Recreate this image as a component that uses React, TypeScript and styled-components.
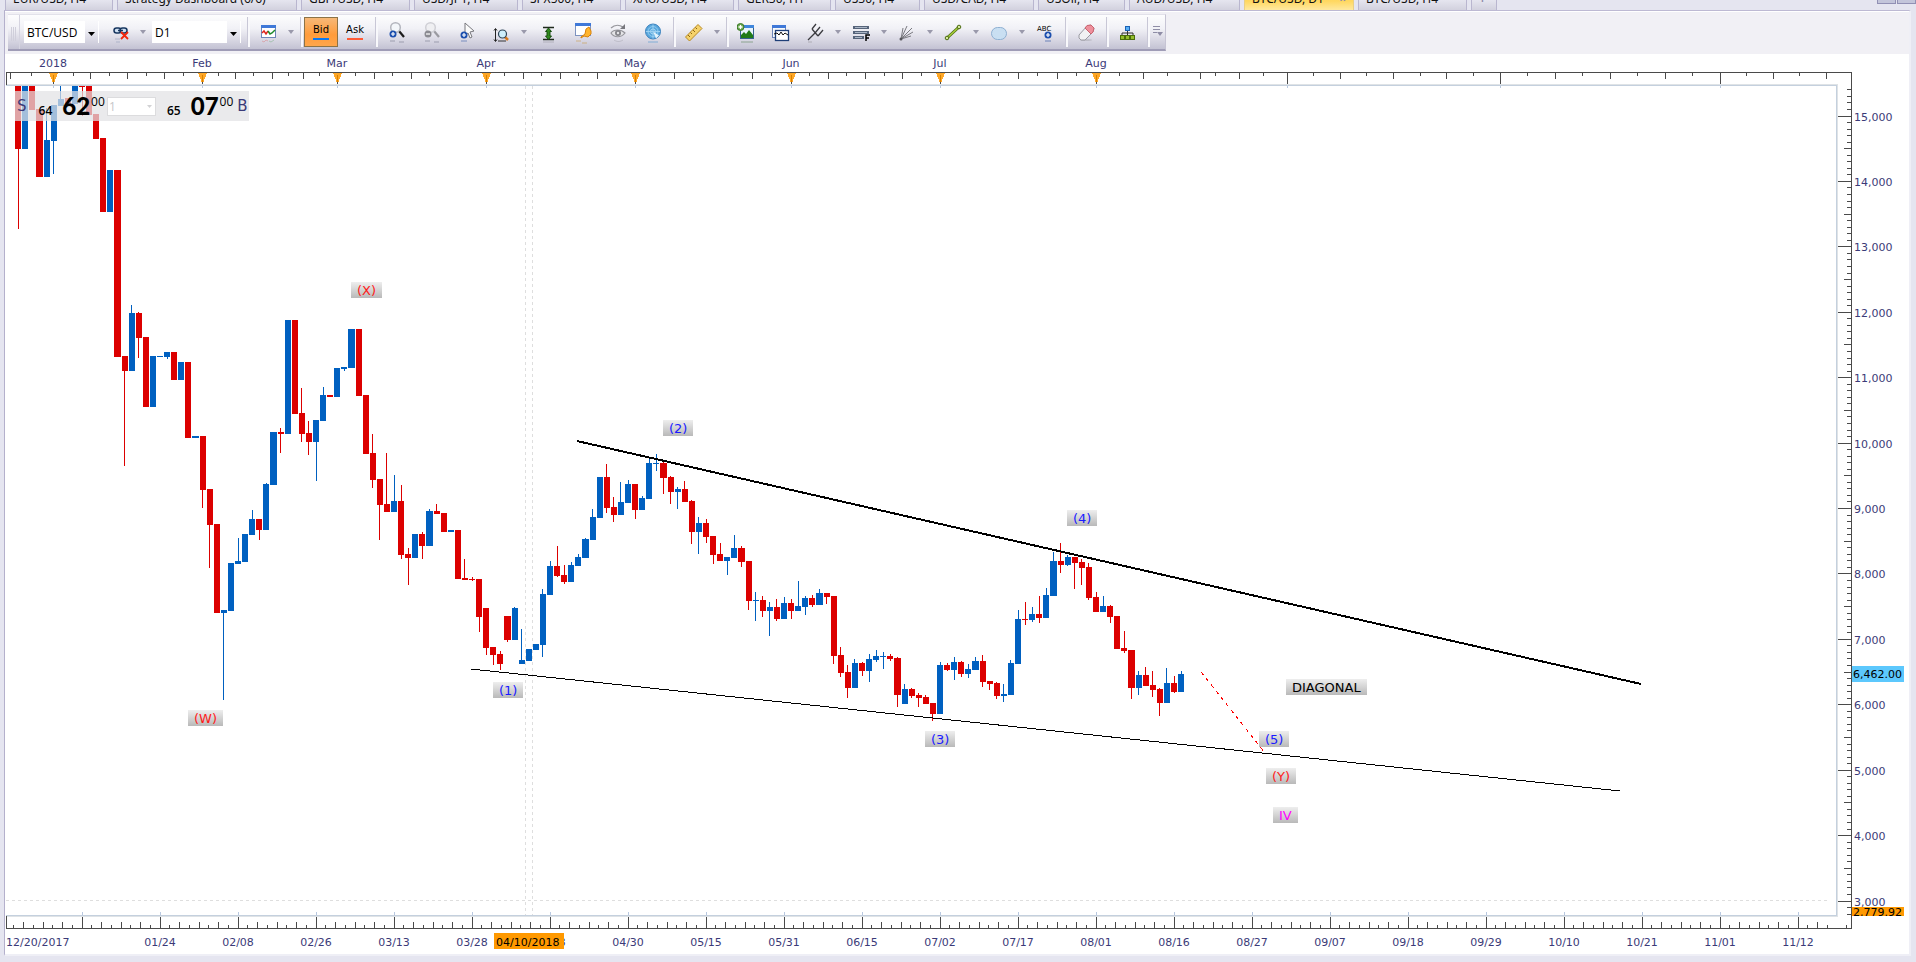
import React from "react";
import styled, { createGlobalStyle } from "styled-components";

const ink = "#3b3a78";
const rule = "#4a4a4a";
const up = "#0060c0";
const down = "#dc0000";
const uiFont = `Verdana, "DejaVu Sans", sans-serif`;

const GlobalStyle = createGlobalStyle`
  * { box-sizing: border-box; }
  body { margin: 0; background: #e5e5f0; font-family: ${uiFont}; font-size: 11px; color: ${ink}; }
  button, select, input { font: inherit; color: inherit; }
`;

/* ---------- window frame ---------- */

const Window = styled.div`
  display: flex;
  flex-direction: column;
  height: 100vh;
  min-height: 480px;
  overflow: hidden;
`;

const TabStrip = styled.nav`
  display: flex;
  align-items: flex-end;
  gap: 4px;
  height: 10px;
  flex: none;
  padding-left: 5px;
  overflow: hidden;
`;

const Tab = styled.button<{ $width: number; $active?: boolean }>`
  display: flex;
  align-items: flex-end;
  justify-content: space-between;
  flex: none;
  width: ${(p) => p.$width}px;
  height: 24px;
  padding: 0 7px 3px;
  border: 1px solid ${(p) => (p.$active ? "#e8cf86" : "#b9b6cf")};
  border-bottom: 0;
  background: ${(p) =>
    p.$active
      ? "linear-gradient(#fff0a8, #ffd75e 60%, #ffe9a0)"
      : "linear-gradient(#f4f4f9, #e4e4ee 60%, #d2d1de)"};
  color: #111;
  font-family: "Noto Sans", sans-serif;
  font-size: 12px;
  line-height: 16px;
  white-space: nowrap;
`;

const TabMark = styled.span`
  color: #8e8ba9;
  font-weight: bold;
`;

const WindowButtons = styled.div`
  display: flex;
  align-self: flex-start;
  gap: 1px;
  margin-left: auto;
`;

const WindowButton = styled.button`
  width: 19px;
  height: 4px;
  padding: 0;
  border: 1px solid #9190b4;
  border-top: 0;
  background: #c3c5da;
`;

const Frame = styled.div`
  display: flex;
  flex: 1;
  flex-direction: column;
  min-height: 0;
  margin: 0 5px 6px 4px;
  border-top: 1px solid #bdb9d3;
  border-left: 1px solid #b4b0cc;
  border-right: 2px solid #efeff6;
  border-bottom: 2px solid #efeff6;
  background: #fff;
`;

const ToolArea = styled.div`
  flex: none;
  height: 43px;
  padding: 2px 0 0 3px;
  border-top: 1px solid #fff;
  background: #f1f0f5;
`;

const Toolbar = styled.div`
  display: inline-flex;
  align-items: stretch;
  height: 37px;
  border-top: 1px solid #e2e1ea;
  border-right: 1px solid #c6c4d4;
  border-bottom: 2px solid #9f9cb6;
  background: linear-gradient(#fdfdfe 0%, #f1f1f6 40%, #dcdbe6 68%, #c3c2d3 100%);
`;

const Grip = styled.span`
  width: 12px;
  margin-right: 4px;
  border-right: 1px solid #d5d4e0;
  background: repeating-linear-gradient(90deg, #d0cfdb 0 1px, transparent 1px 2px) 3px 12px / 6px 14px no-repeat;
`;

const Separator = styled.span`
  width: 7px;
  padding: 2px 3px 2px;
  &::before {
    content: "";
    display: block;
    width: 2px;
    height: 100%;
    border-left: 1px solid #c8c7d6;
    background: #f8f8fb;
  }
`;

const Combo = styled.label<{ $width: number; $before?: number; $after: number }>`
  display: flex;
  align-items: center;
  position: relative;
  width: ${(p) => p.$width}px;
  height: 22px;
  margin: 6px ${(p) => p.$after}px 0 ${(p) => p.$before ?? 0}px;
  border-right: 1px solid #fff;
  background: linear-gradient(#fff, #fff) 0 0 / calc(100% - 13px) 100% no-repeat;
`;

const ComboSelect = styled.select`
  width: 100%;
  height: 22px;
  padding: 0 0 0 3px;
  border: 0;
  outline: 0;
  appearance: none;
  background: transparent;
  color: #000;
  font-family: "Open Sans", sans-serif;
  font-size: 12px;
`;

const ComboArrow = styled.svg`
  position: absolute;
  right: 3px;
  top: 11px;
  pointer-events: none;
`;

const ToolButton = styled.button<{ $width?: number }>`
  display: flex;
  align-items: center;
  justify-content: center;
  width: ${(p) => p.$width ?? 34}px;
  padding: 0;
  border: 0;
  background: none;
`;

const PriceSide = styled(ToolButton)<{ $on?: boolean; $bar: string }>`
  flex-direction: column;
  margin: 2px 0;
  border: 1px solid ${(p) => (p.$on ? "#8c7347" : "transparent")};
  background: ${(p) => (p.$on ? "linear-gradient(#f6b878, #ff9c3c 60%, #ffa64b)" : "none")};
  color: #000;
  font-size: 10px;
  line-height: 12px;
  &::after {
    content: "";
    width: 16px;
    height: 2px;
    margin-top: 2px;
    background: ${(p) => p.$bar};
  }
`;

/* ---------- chart layout ---------- */

const Chart = styled.main`
  display: grid;
  flex: 1;
  grid-template-columns: minmax(0, 1fr) 72px;
  grid-template-rows: 31px minmax(0, 1fr) 38px;
  min-height: 0;
  padding-left: 1px;
`;

const Scale = styled.svg`
  display: block;
  width: 100%;
  height: 100%;
  overflow: hidden;
  font-family: ${uiFont};
  font-size: 11px;
  fill: ${ink};
  shape-rendering: crispEdges;
`;

const Plot = styled.section`
  position: relative;
  border: 1px solid #c4d0de;
  border-left: 0;
  box-shadow: 1px -1px 0 #dfe3e6, 1px 1px 0 #dfe3e6;
`;

const Note = styled.span<{ $x: number; $y: number; $color: string }>`
  position: absolute;
  left: ${(p) => p.$x}px;
  top: ${(p) => p.$y}px;
  height: 16px;
  padding: 1px 6px 0;
  background: linear-gradient(#eeeeee, #b9b9b9);
  color: ${(p) => p.$color};
  font-size: 13px;
  line-height: 16px;
  white-space: nowrap;
`;

const DealTicket = styled.div`
  position: absolute;
  left: 9px;
  top: 5px;
  display: flex;
  align-items: center;
  width: 234px;
  height: 30px;
  background: rgba(226, 226, 229, 0.72);
`;

const Quote = styled.button`
  display: flex;
  align-items: baseline;
  width: 92px;
  height: 30px;
  padding: 0 2px;
  border: 0;
  background: none;
  line-height: 30px;
`;

const Side = styled.span`
  align-self: flex-start;
  color: ${ink};
  font-size: 15px;
`;

const Handle = styled.span`
  margin-left: 12px;
  color: #000;
  font-family: "Open Sans", sans-serif;
  font-size: 12px;
  font-weight: 600;
`;

const BigFigure = styled.span`
  margin-left: 10px;
  color: #000;
  font-family: Lato, sans-serif;
  font-size: 24px;
  font-weight: 900;
`;

const Pip = styled.sup`
  align-self: flex-start;
  margin: 0 4px 0 1px;
  color: #000;
  font-family: "Open Sans", sans-serif;
  font-size: 12px;
  line-height: 21px;
`;

const BuyQuote = styled(Quote)`
  width: 88px;
  margin-left: auto;
  padding: 0;
  ${Handle} { margin-left: 6px; }
`;

const LotsBox = styled.label`
  position: relative;
  display: flex;
`;

const Lots = styled.select`
  width: 49px;
  height: 19px;
  padding: 0 1px;
  border: 1px solid #dcdcde;
  appearance: none;
  background: #fff;
  color: #c6c6c9;
  font-family: "Open Sans", sans-serif;
  font-size: 12px;
`;

const LotsArrow = styled.svg`
  position: absolute;
  right: 4px;
  top: 8px;
  pointer-events: none;
`;

/* ---------- toolbar icons, each on a 20 x 24 grid ---------- */

const Icon = ({ children }: { children: React.ReactNode }) => (
  <svg width="20" height="24" viewBox="0 0 20 24" fill="none" aria-hidden="true">
    {children}
  </svg>
);

const PlusBadge = ({ x, y, color = "#1c4fae", sign = true }: { x: number; y: number; color?: string; sign?: boolean }) => (
  <>
    <circle cx={x} cy={y} r="3.5" fill={color} />
    <path d={`M${x - 2} ${y}h4${sign ? `M${x} ${y - 2}v4` : ""}`} stroke="#fff" strokeWidth="1.2" />
  </>
);

const DropArrow = ({ label }: { label: string }) => (
  <ToolButton $width={12} aria-label={label}>
    <svg width="6" height="4" viewBox="0 0 6 4">
      <path d="M0 0h6L3 4z" fill="#9a99ab" />
    </svg>
  </ToolButton>
);

const LinkIcon = () => (
  <Icon>
    <rect x="4" y="8" width="7" height="5" rx="2.5" fill="#cfe0f2" stroke="#17365f" strokeWidth="1.5" />
    <rect x="10" y="8" width="7" height="5" rx="2.5" fill="#cfe0f2" stroke="#17365f" strokeWidth="1.5" />
    <path d="M8 10.5h5" stroke="#17365f" strokeWidth="1.5" />
    <path d="M11 12l7 7M18 12l-7 7" stroke="#f3260b" strokeWidth="1.8" />
    <path d="M5 19h5M6 22h4" stroke="#8090ac" opacity=".45" />
  </Icon>
);

const ChartIcon = () => (
  <Icon>
    <rect x="3.5" y="5.5" width="14" height="12" fill="#fff" stroke="#6d86b8" />
    <rect x="3" y="5" width="15" height="3" fill="#3f78d8" />
    <path d="M4 13l2-2 2 3 2-3" stroke="#e0261c" strokeWidth="1.5" />
    <path d="M10 11l2 3 2-1 3-3" stroke="#1e8a2c" strokeWidth="1.5" />
    <path d="M4 21l2 1 2-2 2 1" stroke="#e0261c" opacity=".25" />
    <path d="M11 21l2 1 3-2" stroke="#1e8a2c" opacity=".25" />
  </Icon>
);

const LensIcon = ({ muted }: { muted?: boolean }) => (
  <Icon>
    <path d="M12 11l5 6" stroke={muted ? "#9a9aa1" : "#1d1d1d"} strokeWidth="2.2" />
    <circle cx="8.5" cy="7.5" r="4.8" fill={muted ? "#efeff2" : "#f3f6fa"} stroke={muted ? "#cfcfd5" : "#b3b5bd"} strokeWidth="1.5" />
    <PlusBadge x={6} y={14} color={muted ? "#8b8b92" : "#1c4fae"} sign={!muted} />
    <path d="M3 21h5M12 22h5" stroke="#8f90a2" opacity=".4" strokeWidth="2" />
  </Icon>
);

const PointerIcon = () => (
  <Icon>
    <path d="M8 3v12l3-2 2 5 2-1-2-5 4-1z" fill="#fbfbfb" stroke="#77777d" />
    <PlusBadge x={7} y={15} />
    <path d="M4 21h6" stroke="#4f6fb0" opacity=".35" strokeWidth="2" />
  </Icon>
);

const RangeIcon = () => (
  <Icon>
    <path d="M4.5 9v12M3 10.5l1.5-2 1.5 2M3 19.5l1.5 2 1.5-2" stroke="#222" />
    <path d="M14 17l3 3" stroke="#d87a1e" strokeWidth="2.5" />
    <circle cx="11.5" cy="14" r="4" fill="#cdeefb" stroke="#2e4456" strokeWidth="1.2" />
    <path d="M7 21h8" stroke="#333" />
  </Icon>
);

const FitHeightIcon = () => (
  <Icon>
    <path d="M5 7.5h11M5 19.5h11" stroke="#1f2a1c" strokeWidth="1.5" />
    <path d="M10.5 8l3 3.500h-1.500v4.500h1.500l-3 3.500-3-3.500H9v-4.500H7.500z" fill="#2f8a1c" stroke="#174d0d" />
    <path d="M5 22h11" stroke="#555" opacity=".25" />
  </Icon>
);

const WindowKeyIcon = () => (
  <Icon>
    <rect x="2.5" y="3.5" width="15" height="12" fill="#fff" stroke="#7d92bf" />
    <rect x="2" y="3" width="16" height="3" fill="#3f78d8" />
    <path d="M8 17l4-3 1-5 3-2 2 4v3l-3 3-4-1-3 2z" fill="#ffb52e" stroke="#d8820b" />
    <path d="M3 21h5M9 23h5" stroke="#c99a4a" opacity=".3" strokeWidth="2" />
  </Icon>
);

const EyeIcon = () => (
  <Icon>
    <path d="M3 13c3-4 10-4 14 0-4 5-11 5-14 0z" fill="#e5e5e8" stroke="#96969c" strokeWidth="1.2" />
    <circle cx="10" cy="13" r="3" fill="#85858b" />
    <circle cx="10" cy="13" r="1.2" fill="#e5e5e8" />
    <path d="M3 8c4-4 9-3 12-1" stroke="#96969c" strokeWidth="1.2" />
    <path d="M17 4v5h-5z" fill="#77777d" />
    <path d="M6 20c3 2 6 2 9 0" stroke="#9a9aa4" opacity=".4" />
  </Icon>
);

const GlobeIcon = () => (
  <Icon>
    <circle cx="10" cy="11.5" r="7.5" fill="#58a6dc" stroke="#3c82be" />
    <circle cx="10" cy="11.5" r="5" stroke="#8fcaf0" />
    <circle cx="10" cy="11.5" r="2.5" stroke="#a9d8f5" />
    <path d="M10 11.5l6 4-3 3z" fill="#e3f4fd" />
    <path d="M3 11.5h14M10 4.5v14" stroke="#9bd0f2" />
    <path d="M5 22h10" stroke="#5f9fd0" opacity=".35" strokeWidth="2" />
  </Icon>
);

const RulerIcon = () => (
  <Icon>
    <path d="M1.5 17L14 4.5l4 4L5.5 21z" fill="#f5d26b" stroke="#b98a22" />
    <path d="M4 15l2 2M6.5 12.5l1.5 1.5M9 10l2 2M11.5 7.5l1.5 1.5" stroke="#8d6514" />
  </Icon>
);

const ImageAddIcon = () => (
  <Icon>
    <rect x="3.5" y="5.5" width="13" height="13" fill="#e8f3fc" stroke="#35628d" />
    <rect x="3" y="5" width="14" height="3" fill="#3f86dc" />
    <path d="M4 18v-3l3-3 2 2 3-4 4 5v3z" fill="#1f7a18" />
    <circle cx="3.5" cy="7" r="3.5" fill="#6aa84f" stroke="#3d7a28" />
    <path d="M1.5 7h4M3.5 5v4" stroke="#fff" strokeWidth="1.3" />
    <path d="M4 22h12" stroke="#6d8e6d" opacity=".35" strokeWidth="2" />
  </Icon>
);

const WindowsIcon = () => (
  <Icon>
    <rect x="1.5" y="5.5" width="13" height="12" fill="#f6f9fd" stroke="#6d86b8" />
    <rect x="1" y="5" width="14" height="3" fill="#3f78d8" />
    <rect x="4.5" y="10.5" width="13" height="10" fill="#fff" stroke="#1f3f78" strokeWidth="1.3" />
    <path d="M3 14l3-1 2 2 2-3 2 3 2-2 3 2" stroke="#111" />
  </Icon>
);

const PitchforkIcon = () => (
  <Icon>
    <path d="M3 20L10 13M7 9l6 7M7 9l4-5M10 13l5-6M13 16l5-6" stroke="#3b3b40" strokeWidth="1.3" />
    <path d="M3 22h4" stroke="#777" opacity=".4" />
  </Icon>
);

const FibIcon = () => (
  <Icon>
    <path d="M2 7.5h16M2 12.5h16M2 17.5h11" stroke="#56647a" strokeWidth="3" />
    <path d="M4 7.5h12M4 12.5h12M4 17.5h7" stroke="#aab6c6" />
    <path d="M15 21v-6h4M15 18h3" stroke="#000" strokeWidth="1.5" />
  </Icon>
);

const FanIcon = () => (
  <Icon>
    <path d="M4 19L6 8M4 19l6-13M4 19L15 8M4 19l12-7M4 19l10-3" stroke="#7a7a80" />
    <circle cx="4" cy="19" r="1.5" fill="#55555b" />
  </Icon>
);

const TrendIcon = () => (
  <Icon>
    <path d="M4 18L16 7" stroke="#4d6b12" strokeWidth="3" />
    <path d="M4 18L16 7" stroke="#a6cf3a" strokeWidth="1.5" />
    <circle cx="4" cy="18" r="1.8" fill="#d3e89a" stroke="#4d6b12" />
    <circle cx="16" cy="7" r="1.8" fill="#d3e89a" stroke="#4d6b12" />
  </Icon>
);

const EllipseIcon = () => (
  <Icon>
    <rect x="2.5" y="7.5" width="15" height="12" rx="6" fill="#c9dff2" stroke="#8eb0d2" />
  </Icon>
);

const TextIcon = () => (
  <Icon>
    <text x="2" y="11" fontSize="7" fontFamily="DejaVu Sans, sans-serif" fill="#000">ABC</text>
    <PlusBadge x={13} y={15} />
    <path d="M10 21h6" stroke="#4f6fb0" opacity=".4" strokeWidth="2" />
  </Icon>
);

const EraserIcon = () => (
  <Icon>
    <ellipse cx="10" cy="20" rx="6" ry="1" fill="#777" opacity=".25" />
    <path d="M3 15l8-9 4-1 3 3-1 4-8 8H5l-2-2z" fill="#f1f1f3" stroke="#9a9aa2" />
    <path d="M9 8l2-2.5L15 5l3 3-1 4-2 2z" fill="#ee8f9c" stroke="#c9636f" />
  </Icon>
);

const TreeIcon = () => (
  <Icon>
    <path d="M10.5 9v7M5 16v-3h11v3" stroke="#333" />
    <rect x="8.5" y="6.5" width="4" height="4" fill="#58aef5" stroke="#1b62b5" />
    <rect x="3.5" y="15.5" width="4" height="4" fill="#94bf2c" stroke="#4b6d0c" />
    <rect x="8.5" y="15.5" width="4" height="4" fill="#94bf2c" stroke="#4b6d0c" />
    <rect x="13.5" y="15.5" width="4" height="4" fill="#94bf2c" stroke="#4b6d0c" />
  </Icon>
);

const OverflowIcon = () => (
  <svg width="10" height="12" viewBox="0 0 10 12" aria-hidden="true">
    <path d="M0 .5h7M0 3.5h7M0 6.5h4" stroke="#8f8da6" />
    <path d="M4 6h6L7 10z" fill="#8f8da6" />
  </svg>
);

/* ---------- chart data ---------- */

type Candle = [dir: "u" | "d", top: number, bottom: number, high?: number, low?: number];

/* Levels are chart pixels; LEFT and TOP are where the plot begins on that grid. */
const LEFT = 6;
const TOP = 86;

const candles: Candle[] = [
  ["d", 80, 149, 80, 229], ["u", 80, 149], ["d", 80, 110], ["d", 109, 177], ["u", 140, 177, 108],
  ["u", 105, 141, 105, 174], ["u", 99, 106, 80], ["d", 98, 104], ["u", 80, 104], ["d", 80, 87, 80, 116],
  ["d", 80, 115], ["d", 114, 139], ["d", 138, 212], ["u", 170, 212], ["d", 170, 357],
  ["d", 356, 371, 356, 466], ["u", 313, 371, 305], ["d", 313, 338, 312, 358], ["d", 337, 407], ["u", 356, 407],
  ["u", 356, 357], ["u", 352, 357, 352, 359], ["d", 352, 380], ["u", 362, 380], ["d", 362, 438],
  ["u", 436, 438], ["d", 436, 490, 436, 508], ["d", 489, 525, 489, 568], ["d", 524, 613], ["u", 610, 613, 610, 700],
  ["u", 563, 611], ["u", 561, 564, 538], ["u", 534, 562], ["u", 519, 535, 510], ["d", 519, 530, 519, 540],
  ["u", 484, 530, 483], ["u", 432, 485], ["d", 432, 434, 428, 453], ["u", 320, 434], ["d", 320, 414],
  ["d", 413, 434, 388, 442], ["d", 433, 442, 421, 455], ["u", 420, 442, 420, 481], ["u", 395, 421, 387], ["d", 395, 397],
  ["u", 368, 397], ["u", 367, 369, 367, 371], ["u", 329, 368], ["d", 329, 396], ["d", 395, 454],
  ["d", 453, 480, 434, 488], ["d", 479, 505, 479, 540], ["d", 504, 512, 453], ["u", 501, 512, 475], ["d", 501, 555, 485, 559],
  ["d", 554, 558, 548, 585], ["u", 534, 558], ["d", 534, 546, 532, 559], ["u", 511, 546, 509], ["d", 511, 514, 504],
  ["d", 513, 532], ["u", 530, 532], ["d", 530, 579], ["d", 578, 580, 559], ["d", 579, 580, 577, 581],
  ["d", 579, 617, 579, 632], ["d", 608, 648, 608, 655], ["d", 647, 655, 647, 665], ["d", 654, 664, 651, 670], ["d", 616, 640, 616, 642],
  ["u", 608, 640, 607], ["u", 660, 664, 629], ["u", 649, 661], ["u", 644, 650], ["u", 594, 645, 589, 657],
  ["u", 566, 595, 561], ["d", 566, 576, 546, 577], ["d", 575, 582, 565, 584], ["u", 565, 582, 562], ["u", 557, 566, 554],
  ["u", 539, 558, 538], ["u", 517, 540, 509], ["u", 477, 518], ["d", 477, 508, 464, 513], ["d", 507, 515, 497, 522],
  ["u", 502, 515, 482], ["u", 484, 503, 480], ["d", 484, 510, 484, 519], ["u", 498, 510, 496], ["u", 463, 499, 458],
  ["u", 463, 464, 454, 471], ["d", 463, 478, 462, 494], ["d", 477, 492, 476, 504], ["u", 489, 492, 487, 509], ["d", 489, 502, 481],
  ["d", 501, 532, 500, 544], ["u", 523, 532, 517, 554], ["d", 523, 537, 519, 543], ["d", 536, 555, 536, 564], ["d", 554, 561, 543],
  ["u", 557, 561, 557, 575], ["u", 548, 558, 535], ["d", 548, 562, 546, 567], ["d", 561, 601, 561, 610], ["u", 600, 601, 592, 621],
  ["d", 600, 611, 596, 617], ["u", 607, 611, 602, 636], ["d", 607, 619, 599, 621], ["u", 603, 619, 597], ["d", 603, 611, 599, 619],
  ["u", 606, 611, 581], ["u", 598, 607, 596, 615], ["d", 598, 605, 595, 607], ["u", 593, 605, 589], ["d", 593, 597, 593, 604],
  ["d", 596, 656, 596, 664], ["d", 655, 673, 647, 677], ["d", 672, 688, 665, 698], ["u", 663, 688, 659], ["d", 663, 671, 662, 676],
  ["u", 659, 671, 654, 682], ["u", 656, 660, 650, 662], ["u", 656, 657, 652, 669], ["d", 656, 659, 654, 661], ["d", 658, 695, 657, 707],
  ["u", 689, 704, 684], ["d", 689, 696, 688, 698], ["d", 695, 698, 693, 707], ["d", 697, 704, 695], ["d", 703, 714, 703, 721],
  ["u", 665, 714, 662], ["d", 665, 670, 663, 671], ["u", 662, 670, 657, 680], ["d", 662, 674, 661, 677], ["u", 669, 674, 664, 678],
  ["u", 661, 670, 657], ["d", 661, 682, 655, 687], ["d", 681, 684, 681, 690], ["d", 683, 696, 682, 699], ["u", 694, 696, 684, 702],
  ["u", 663, 695, 660], ["u", 619, 664, 610], ["d", 619, 620, 602, 625], ["u", 614, 620, 607, 622], ["d", 614, 618, 596, 623],
  ["u", 595, 618, 588], ["u", 561, 596, 552], ["d", 561, 565, 543, 573], ["u", 557, 565, 555, 566], ["d", 557, 563, 557, 589],
  ["d", 562, 568, 559, 585], ["d", 567, 598, 563, 600], ["d", 597, 612, 592], ["u", 606, 612, 596], ["d", 606, 617, 605, 623],
  ["d", 616, 649], ["d", 648, 651, 631, 653], ["d", 650, 688, 650, 699], ["u", 675, 688, 671, 695], ["d", 675, 686, 667],
  ["d", 685, 690, 671, 697], ["d", 689, 703, 688, 716], ["u", 683, 703, 668], ["d", 683, 692, 676, 693], ["u", 674, 692, 671],
];

/* Eleven sessions span 78 pixels. */
const bodyX = (i: number) => 15 + Math.floor((78 * i + 7) / 11);
const wickX = (i: number) => 18 + Math.floor((78 * i + 2) / 11);

const months: [string, number][] = [
  ["2018", 53], ["Feb", 202], ["Mar", 337], ["Apr", 486], ["May", 635], ["Jun", 791], ["Jul", 940], ["Aug", 1096],
];
const plainMonths = [1287, 1500, 1720];
const weekTicks = [
  10, 90, 127, 164, 235, 272, 303, 374, 411, 448, 523, 560, 597, 674, 713, 752, 828, 865, 902, 979, 1018, 1057,
  1143, 1200, 1239, 1340, 1393, 1446, 1555, 1610, 1665, 1773, 1826,
];
const halfTicks = [
  31, 73, 109, 146, 183, 218, 253, 288, 319, 355, 392, 429, 466, 504, 541, 578, 616, 654, 693, 732, 771, 809, 846,
  884, 921, 959, 998, 1037, 1076, 1119, 1167, 1215, 1263, 1313, 1366, 1420, 1473, 1527, 1582, 1637, 1692, 1746, 1799,
];

const dates = [
  "01/24", "02/08", "02/26", "03/13", "03/28", "04/13", "04/30", "05/15", "05/31", "06/15", "07/02",
  "07/17", "08/01", "08/16", "08/27", "09/07", "09/18", "09/29", "10/10", "10/21", "11/01", "11/12",
];
const dateX = (n: number) => 4 + 78 * n;

const prices = Array.from({ length: 13 }, (_, n) => 15000 - n * 1000);
const priceY = (price: number) => Math.floor(116 + ((15000 - price) * 785) / 12000);

const notes: [string, number, number, string][] = [
  ["(W)", 188, 710, "#ff1a1a"],
  ["(X)", 351, 282, "#ff1a1a"],
  ["(1)", 493, 682, "#1a1aff"],
  ["(2)", 663, 420, "#1a1aff"],
  ["(3)", 925, 731, "#1a1aff"],
  ["(4)", 1067, 510, "#1a1aff"],
  ["(5)", 1259, 731, "#1a1aff"],
  ["(Y)", 1266, 768, "#ff1a1a"],
  ["IV", 1273, 807, "#ff00ff"],
  ["DIAGONAL", 1286, 679, "#000000"],
];

const tabs: [string, number][] = [
  ["EUR/USD, H4", 108], ["Strategy Dashboard (6/6)", 180], ["GBP/USD, H4", 109], ["USD/JPY, H4", 104],
  ["SPX500, H4", 99], ["XAU/USD, H4", 109], ["GER30, H1", 93], ["US30, H4", 85], ["USD/CAD, H4", 110],
  ["USOil, H4", 87], ["AUD/USD, H4", 111], ["BTC/USD, D1", 110], ["BTC/USD, H4", 109], ["+", 26],
];

/* ---------- chart parts ---------- */

const MonthScale = () => (
  <Scale>
    <g transform={`translate(${-LEFT} -54)`}>
      <rect x={LEFT} y="72" width="100%" height="1" fill={rule} />
      <rect x={LEFT} y="72" width="1" height="13" fill={rule} />
      {weekTicks.map((x) => <rect key={x} x={x} y="73" width="1" height="6" fill={rule} />)}
      {halfTicks.map((x) => <rect key={x} x={x} y="73" width="1" height="3" fill={rule} />)}
      {plainMonths.map((x) => <rect key={x} x={x} y="73" width="1" height="12" fill={rule} />)}
      {months.map(([name, x]) => (
        <g key={name}>
          <path d={`M${x - 4} 73h9l-4 10h-1z`} fill="#ffa726" />
          <path d={`M${x} 75h1v8h-1z`} fill="#d98200" />
          <rect x={x} y="82" width="1" height="3" fill={rule} />
          <text x={x} y="67" textAnchor="middle">{name}</text>
        </g>
      ))}
    </g>
  </Scale>
);

const DateScale = () => {
  const ticks = Array.from({ length: 190 }, (_, j) => j + 1);
  return (
    <Scale>
      <g transform={`translate(${-LEFT} 0)`}>
        <rect x={LEFT} y="12" width="100%" height="1" fill={rule} />
        <rect x={LEFT} y="0" width="1" height="13" fill={rule} />
        {ticks.map((j) => {
          const height = j % 8 === 0 ? 12 : j % 2 === 0 ? 6 : 3;
          return <rect key={j} x={4 + Math.floor((78 * j) / 8)} y={12 - height} width="1" height={height} fill={rule} />;
        })}
        <text x={LEFT} y="30">12/20/2017</text>
        {dates.map((d, n) => (
          <text key={d} x={dateX(n + 2)} y="30" textAnchor="middle">{d}</text>
        ))}
        <rect x="494" y="17" width="70" height="16" fill="#ff9900" />
        <text x="496" y="30" fill="#000">04/10/2018</text>
      </g>
    </Scale>
  );
};

const PriceScale = () => {
  const steps = Array.from({ length: 127 }, (_, n) => 15400 - n * 100);
  return (
    <Scale>
      <g transform="translate(0 -85)">
        <rect x="14" y="85" width="1" height="100%" fill={rule} />
        {steps.map((p) => {
          const length = p % 1000 === 0 ? 14 : p % 500 === 0 ? 7 : 4;
          return <rect key={p} x={14 - length} y={priceY(p)} width={length} height="1" fill={rule} />;
        })}
        {prices.map((p) => (
          <text key={p} x="17" y={priceY(p) + 5}>{p.toLocaleString("en-US")}</text>
        ))}
        <rect x="15" y="666" width="52" height="16" fill="#5cc8fd" />
        <text x="16" y="678" fill="#000">6,462.00</text>
        <rect x="15" y="907" width="52" height="16" fill="#ff9900" />
        <text x="16" y="916" fill="#000">2,779.92</text>
      </g>
    </Scale>
  );
};

const PlotDrawing = () => (
  <Scale>
    <g transform={`translate(${-LEFT} ${-TOP})`}>
      {[...months.map((m) => m[1]), ...plainMonths].map((x) => (
        <rect key={x} x={x} y={TOP} width="1" height="2" fill="#b8c8e0" />
      ))}
      {Array.from({ length: 23 }, (_, n) => (
        <rect key={n} x={dateX(n + 1)} y="912" width="1" height="3" fill="#b8c8e0" />
      ))}
      {candles.map(([dir, top, bottom, high = top, low = bottom], i) => (
        <g key={i} fill={dir === "u" ? up : down}>
          <rect x={bodyX(i)} y={top} width={bodyX(i + 1) - bodyX(i) - 1} height={bottom - top} />
          <rect x={wickX(i)} y={high} width="1" height={low - high} />
        </g>
      ))}
      <g stroke="#dedede" strokeWidth="1" strokeDasharray="3 3">
        <line x1="525.5" y1="86" x2="525.5" y2="915" />
        <line x1="532.5" y1="86" x2="532.5" y2="915" />
        <line x1="6" y1="900.5" x2="100%" y2="900.5" />
      </g>
      <line x1="577" y1="441" x2="1641" y2="684" stroke="#000" strokeWidth="2" />
      <line x1="471" y1="669" x2="1620" y2="791" stroke="#000" />
      <line x1="1201" y1="672" x2="1265" y2="753" stroke="#ff0000" strokeDasharray="4 4" />
    </g>
  </Scale>
);

export default function App() {
  return (
    <Window>
      <GlobalStyle />
      <TabStrip aria-label="Charts">
        {tabs.map(([name, width], i) => (
          <Tab key={i} $width={width} $active={name === "BTC/USD, D1"}>
            {name === "+" ? <TabMark>+</TabMark> : name}
            {name === "BTC/USD, D1" && <TabMark>×</TabMark>}
          </Tab>
        ))}
        <WindowButtons>
          <WindowButton aria-label="Scroll tabs" />
          <WindowButton aria-label="Close window" />
        </WindowButtons>
      </TabStrip>
      <Frame>
        <ToolArea>
          <Toolbar role="toolbar" aria-label="Chart tools">
            <Grip />
            <Combo $width={75} $after={4}>
              <ComboSelect aria-label="Instrument"><option>BTC/USD</option></ComboSelect>
              <ComboArrow width="7" height="4" viewBox="0 0 7 4"><path d="M0 0h7L3.5 4z" fill="#000" /></ComboArrow>
            </Combo>
            <ToolButton aria-label="Unlink chart"><LinkIcon /></ToolButton>
            <DropArrow label="Link options" />
            <Combo $width={89} $before={3} $after={3}>
              <ComboSelect aria-label="Period"><option>D1</option></ComboSelect>
              <ComboArrow width="7" height="4" viewBox="0 0 7 4"><path d="M0 0h7L3.5 4z" fill="#000" /></ComboArrow>
            </Combo>
            <Separator />
            <ToolButton aria-label="Chart type"><ChartIcon /></ToolButton>
            <DropArrow label="Chart types" />
            <Separator />
            <PriceSide $on $bar="#0a78f0">Bid</PriceSide>
            <PriceSide $bar="#ff5a36">Ask</PriceSide>
            <Separator />
            <ToolButton $width={35} aria-label="Zoom in"><LensIcon /></ToolButton>
            <ToolButton $width={35} aria-label="Zoom out"><LensIcon muted /></ToolButton>
            <ToolButton $width={35} aria-label="Cursor"><PointerIcon /></ToolButton>
            <ToolButton aria-label="Scale"><RangeIcon /></ToolButton>
            <DropArrow label="Scale options" />
            <ToolButton $width={35} aria-label="Fit height"><FitHeightIcon /></ToolButton>
            <ToolButton $width={35} aria-label="Chart options"><WindowKeyIcon /></ToolButton>
            <ToolButton $width={35} aria-label="Show or hide"><EyeIcon /></ToolButton>
            <ToolButton $width={35} aria-label="Market"><GlobeIcon /></ToolButton>
            <Separator />
            <ToolButton aria-label="Measure"><RulerIcon /></ToolButton>
            <DropArrow label="Measure options" />
            <Separator />
            <ToolButton aria-label="Add picture"><ImageAddIcon /></ToolButton>
            <ToolButton aria-label="Add indicator"><WindowsIcon /></ToolButton>
            <ToolButton aria-label="Pitchfork"><PitchforkIcon /></ToolButton>
            <DropArrow label="Pitchforks" />
            <ToolButton aria-label="Fibonacci"><FibIcon /></ToolButton>
            <DropArrow label="Fibonacci tools" />
            <ToolButton aria-label="Fan"><FanIcon /></ToolButton>
            <DropArrow label="Fans" />
            <ToolButton aria-label="Trend line"><TrendIcon /></ToolButton>
            <DropArrow label="Lines" />
            <ToolButton aria-label="Ellipse"><EllipseIcon /></ToolButton>
            <DropArrow label="Shapes" />
            <ToolButton aria-label="Text label"><TextIcon /></ToolButton>
            <Separator />
            <ToolButton aria-label="Erase"><EraserIcon /></ToolButton>
            <Separator />
            <ToolButton aria-label="Strategies"><TreeIcon /></ToolButton>
            <Separator />
            <ToolButton $width={14} aria-label="More tools"><OverflowIcon /></ToolButton>
          </Toolbar>
        </ToolArea>
        <Chart>
          <MonthScale />
          <Scale>
            <rect x="0" y="18" width="15" height="1" fill={rule} />
            <rect x="14" y="18" width="1" height="13" fill={rule} />
          </Scale>
          <Plot aria-label="BTC/USD daily chart">
            <PlotDrawing />
            {notes.map(([text, x, y, color]) => (
              <Note key={text} $x={x - LEFT} $y={y - TOP} $color={color}>{text}</Note>
            ))}
            <DealTicket>
              <Quote>
                <Side>S</Side>
                <Handle>64</Handle>
                <BigFigure>62</BigFigure>
                <Pip>00</Pip>
              </Quote>
              <LotsBox>
                <Lots aria-label="Lots" defaultValue="1"><option>1</option></Lots>
                <LotsArrow width="5" height="3" viewBox="0 0 5 3"><path d="M0 0h5L2.5 3z" fill="#d2d2d4" /></LotsArrow>
              </LotsBox>
              <BuyQuote>
                <Handle>65</Handle>
                <BigFigure>07</BigFigure>
                <Pip>00</Pip>
                <Side>B</Side>
              </BuyQuote>
            </DealTicket>
          </Plot>
          <PriceScale />
          <DateScale />
          <Scale>
            <rect x="0" y="12" width="15" height="1" fill={rule} />
            <rect x="14" y="0" width="1" height="13" fill={rule} />
            <rect x="9" y="9" width="1" height="3" fill={rule} />
          </Scale>
        </Chart>
      </Frame>
    </Window>
  );
}
